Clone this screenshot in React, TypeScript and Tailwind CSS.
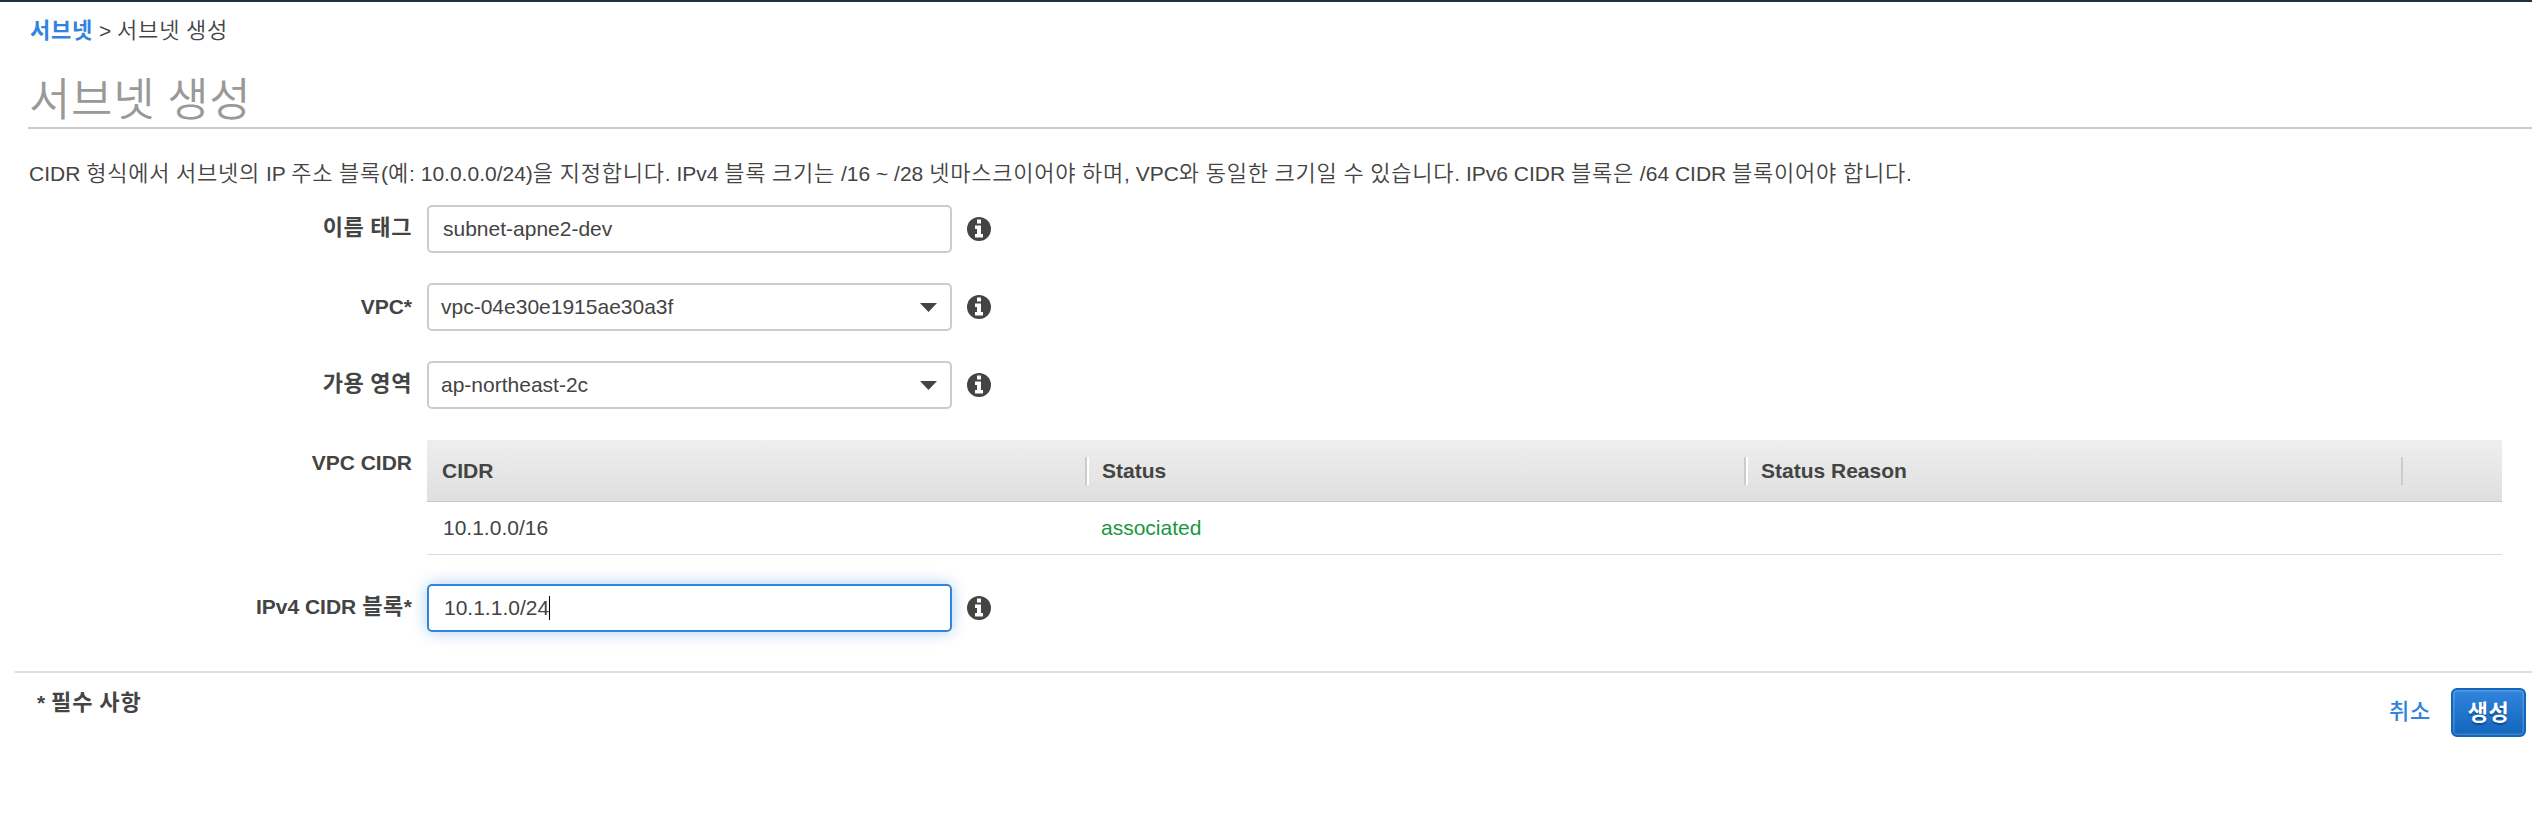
import type { ReactNode } from "react";

const HANGUL = /([\uac00-\ud7a3]+)/;

function Ko({ text, className }: { text: string; className: string }) {
  return (
    <>
      {text.split(HANGUL).map((part, i) =>
        HANGUL.test(part) ? (
          <span key={i} className={`leading-none ${className}`}>
            {part}
          </span>
        ) : (
          part
        ),
      )}
    </>
  );
}

function Label({ text, className = "" }: { text: string; className?: string }) {
  return (
    <div className={`w-[412px] shrink-0 text-right font-bold whitespace-nowrap ${className}`}>
      <Ko text={text} className="text-[22px] tracking-[0.6px]" />
    </div>
  );
}

function Info() {
  return (
    <svg className="mt-3 ml-[15px] size-6 shrink-0" viewBox="0 0 24 24">
      <circle cx="12" cy="12" r="12" fill="#444" />
      <path d="M10 2.5h4v4h-4zM8 8.5h6v8.5h2v3.5H8V17h2v-5H8z" fill="#fff" />
    </svg>
  );
}

function Row({ label, labelClass, children }: { label: string; labelClass?: string; children: ReactNode }) {
  return (
    <div className="flex h-[78px] items-start">
      <Label text={label} className={labelClass} />
      <div className="w-[15px] shrink-0" />
      {children}
      <Info />
    </div>
  );
}

function Select({ value }: { value: string }) {
  return (
    <div className="flex h-12 w-[525px] items-center justify-between rounded-[5px] border-2 border-[#ccc] pr-[13px] pl-3">
      <span>{value}</span>
      <svg className="mt-px h-[9px] w-[17px]" viewBox="0 0 17 9">
        <path d="M0 0h17L8.5 9z" fill="#444" />
      </svg>
    </div>
  );
}

function HeadCell({ title, className, last }: { title: string; className: string; last?: boolean }) {
  return (
    <div className={`flex shrink-0 items-center justify-between ${className}`}>
      <span>{title}</span>
      <div className={`h-7 border-l-2 border-l-[#ccc] ${last ? "w-[2px]" : "w-1 border-r-2 border-r-white"}`} />
    </div>
  );
}

export default function App() {
  return (
    <div className="h-[822px] w-[2532px] overflow-hidden border-t-2 border-[#232f3e] bg-white font-['Liberation_Sans','Noto_Sans_CJK_KR',sans-serif] text-[21px] leading-[30px] text-[#444]">
      <nav className="pt-[14px] pl-[30px] whitespace-nowrap">
        <a className="font-bold text-[#3184dd]">
          <Ko text="서브넷" className="text-[22px] tracking-[0.8px]" />
        </a>
        {" > "}
        <Ko text="서브넷 생성" className="text-[22px] font-[350] tracking-[0.8px]" />
      </nav>
      <h1 className="mt-[21px] ml-7 flex h-[62px] items-center border-b-2 border-[#ccc] pt-[6px] pl-px text-[43px] leading-none font-normal whitespace-nowrap text-[#999]">
        <span>
          <Ko text="서브넷 생성" className="text-[45px] font-[350] tracking-[0.7px]" />
        </span>
      </h1>
      <p className="mt-[30px] pl-[29px] whitespace-nowrap">
        <Ko
          text="CIDR 형식에서 서브넷의 IP 주소 블록(예: 10.0.0.0/24)을 지정합니다. IPv4 블록 크기는 /16 ~ /28 넷마스크이어야 하며, VPC와 동일한 크기일 수 있습니다. IPv6 CIDR 블록은 /64 CIDR 블록이어야 합니다."
          className="text-[22px] font-[350] tracking-[0.76px]"
        />
      </p>

      <div className="mt-4">
        <Row label="이름 태그" labelClass="pt-[8px]">
          <div className="flex h-12 w-[525px] items-center rounded-[5px] border-2 border-[#ccc] pl-[14px]">subnet-apne2-dev</div>
        </Row>
        <Row label="VPC*" labelClass="pt-[9px]">
          <Select value="vpc-04e30e1915ae30a3f" />
        </Row>
        <Row label="가용 영역" labelClass="pt-[8px]">
          <Select value="ap-northeast-2c" />
        </Row>
        <div className="flex h-[145px] items-start pt-px">
          <Label text="VPC CIDR" className="pt-[8px]" />
          <div className="ml-[15px] w-[2075px]">
            <div className="flex h-[62px] border-b border-[#c8c8c8] bg-linear-to-b from-[#eee] to-[#dfdfdf] font-bold">
              <HeadCell title="CIDR" className="w-[662px] pl-[15px]" />
              <HeadCell title="Status" className="w-[659px] pl-[13px]" />
              <HeadCell title="Status Reason" className="w-[655px] pl-[13px]" last />
            </div>
            <div className="flex h-[53px] items-center border-b border-[#ddd] pl-4">
              <span className="w-[658px]">10.1.0.0/16</span>
              <span className="text-[#1a9641]">associated</span>
            </div>
          </div>
        </div>
        <Row label="IPv4 CIDR 블록*" labelClass="pt-[8px]">
          <div className="flex h-12 w-[525px] items-center rounded-[5px] border-2 border-[#3184dd] pl-[15px] shadow-[0_0_16px_rgba(49,132,221,0.4)]">
            10.1.1.0/24
            <span className="h-6 w-px bg-black" />
          </div>
        </Row>
      </div>

      <footer className="mt-[9px] ml-[15px] flex h-[80px] items-start border-t-2 border-[#ddd] pr-[6px] font-bold">
        <div className="pt-[15px] pl-[22px]">
          <Ko text="* 필수 사항" className="text-[22px] tracking-[0.95px]" />
        </div>
        <a className="mt-[24px] ml-auto text-[#3184dd]">
          <Ko text="취소" className="text-[22px] font-medium tracking-[0.8px]" />
        </a>
        <button className="mt-[15px] ml-[20px] h-[49px] w-[75px] rounded-[6px] border-2 border-[#1166bb] bg-linear-to-b from-[#3184dd] to-[#1166bb] font-bold text-white shadow-[inset_0_0_0_1.5px_rgba(255,255,255,0.18)] [text-shadow:0_2px_1px_#0f4f95]">
          <Ko text="생성" className="text-[22px] tracking-[0.6px]" />
        </button>
      </footer>
    </div>
  );
}
